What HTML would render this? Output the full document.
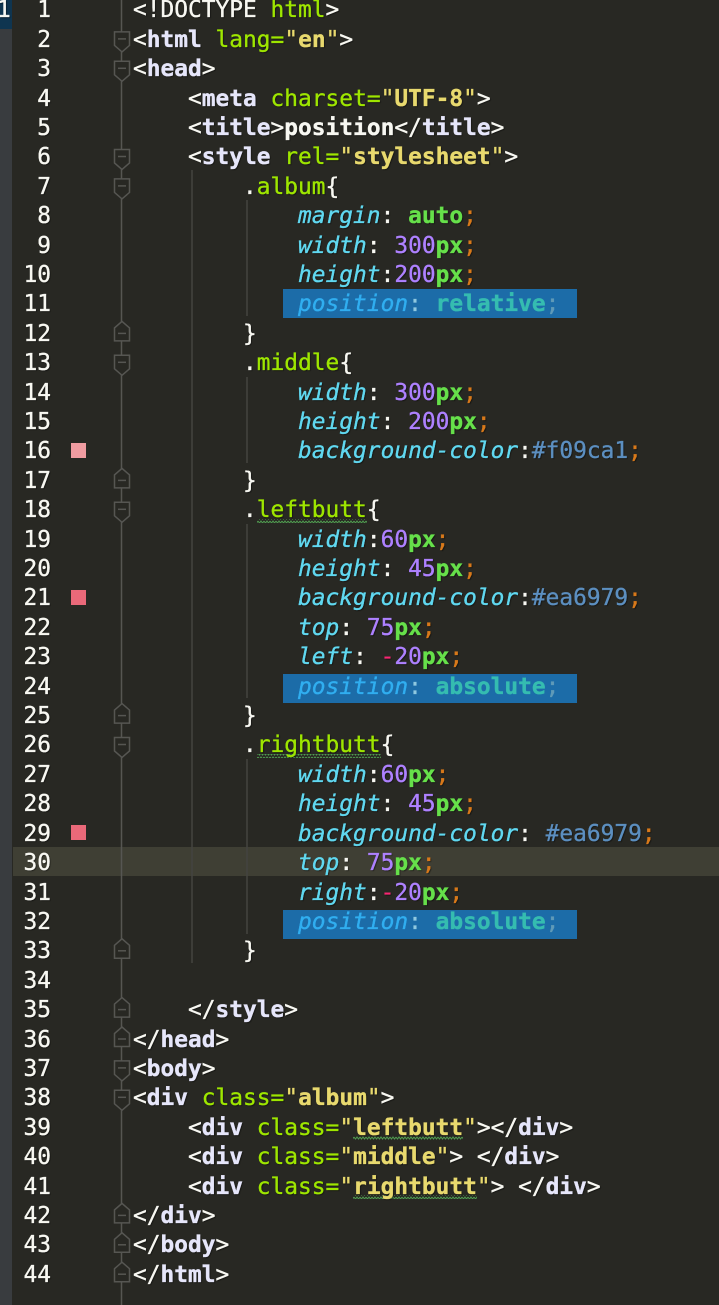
<!DOCTYPE html>
<html lang="en">
<head>
<meta charset="utf-8">
<title>position</title>
<style>
html,body{margin:0;padding:0;background:#282823;}
#w{position:relative;width:719px;height:1305px;overflow:hidden;background:#282823;}
pre{margin:0;position:absolute;font-family:"DejaVu Sans Mono","Liberation Mono",monospace;font-size:22.85px;line-height:29.4px;color:#f8f8f2;-webkit-text-stroke:0.35px currentColor;filter:blur(0.3px);text-shadow:1px 1px 1px rgba(0,0,0,.45);}
#code{left:133px;top:-3.7px;}
#nums{left:0;top:-3.7px;width:51px;text-align:right;}
.hl{position:absolute;left:13px;width:706px;top:847px;height:29px;background:#3f3f34;}
.sel{position:absolute;left:283px;width:294px;height:29px;background:#1c6ca8;}
.sw{position:absolute;left:71px;width:15px;height:15px;}
#side{position:absolute;left:0;top:0;width:12px;height:1305px;background:#393c3f;}
#cur{position:absolute;left:0;top:0;width:12px;height:29px;background:#0f3550;}
#one{position:absolute;left:-3px;top:-3.7px;margin:0;}
svg{position:absolute;left:0;top:0;}
b{font-weight:bold;}
.t{color:#e6e6fa;font-weight:bold;}
.a{color:#9ee600;}
.s{color:#e8d96e;}
.c{color:#9ee600;}
.p{font-style:italic;color:#60d8f0;}
.n{color:#ae81ff;}
.u{color:#66e04a;font-weight:bold;}
.k{color:#66e04a;font-weight:bold;}
.e{color:#d8791a;}
.h{color:#5c8fc0;}
.m{color:#f92672;}
.sp{font-style:italic;color:#30aef0;text-shadow:none;}
.sc{color:#8fc8e0;text-shadow:none;}
.sv{color:#35bcb0;font-weight:bold;text-shadow:none;}
.se{color:#5f9ab8;text-shadow:none;}
</style>
</head>
<body>
<div id="w">
<div id="side"></div>
<div id="cur"></div>
<pre id="one">1</pre>
<div class="hl"></div>
<div class="sel" style="top:289px"></div>
<div class="sel" style="top:674px"></div>
<div class="sel" style="top:910px"></div>
<div class="sw" style="top:443px;background:#f09ca1"></div>
<div class="sw" style="top:590px;background:#ea6979"></div>
<div class="sw" style="top:825px;background:#ea6979"></div>
<svg width="719" height="1305" viewBox="0 0 719 1305">
<defs>
<g id="d"><path d="M114.5 -6.5H129.5V7L122 13.5L114.5 7Z" fill="#282823" stroke="#565652" stroke-width="1.5"/><path d="M118 0.5H126" stroke="#565652" stroke-width="1.5"/></g>
<g id="u"><path d="M114.5 8.5H129.5V-4.5L122 -11L114.5 -4.5Z" fill="#282823" stroke="#565652" stroke-width="1.5"/><path d="M118 1H126" stroke="#565652" stroke-width="1.5"/></g>
<pattern id="z" width="6" height="4" patternUnits="userSpaceOnUse"><path d="M0 1L1.5 3L3 1L4.5 3L6 1" fill="none" stroke="#4f9a4f" stroke-width="1"/></pattern>
</defs>
<path d="M121.5 0V1305" stroke="#565652" stroke-width="1.5"/>
<path d="M192 170V963" stroke="#444440" stroke-width="1.5"/>
<path d="M247 200V316M247 377V463M247 524V698M247 759V934" stroke="#444440" stroke-width="1.5"/>
<use href="#d" y="38.4"/><use href="#d" y="67.8"/><use href="#d" y="156"/><use href="#d" y="185.4"/>
<use href="#u" y="332.4"/><use href="#d" y="361.8"/><use href="#u" y="479.4"/><use href="#d" y="508.8"/>
<use href="#u" y="714.6"/><use href="#d" y="744"/><use href="#u" y="949.8"/>
<use href="#u" y="1008.6"/><use href="#u" y="1038"/><use href="#d" y="1067.4"/><use href="#d" y="1096.8"/>
<use href="#u" y="1214.4"/><use href="#u" y="1243.8"/><use href="#u" y="1273.2"/>
<rect x="257" y="519" width="110" height="4" fill="url(#z)"/>
<rect x="257" y="754" width="124" height="4" fill="url(#z)"/>
<rect x="353" y="1136" width="110" height="4" fill="url(#z)"/>
<rect x="353" y="1195" width="124" height="4" fill="url(#z)"/>
</svg>
<pre id="nums">1
2
3
4
5
6
7
8
9
10
11
12
13
14
15
16
17
18
19
20
21
22
23
24
25
26
27
28
29
30
31
32
33
34
35
36
37
38
39
40
41
42
43
44</pre>
<pre id="code">&lt;!DOCTYPE <span class="a">html</span>&gt;
&lt;<span class="t">html</span> <span class="a">lang=</span><span class="s">"<b>en</b>"</span>&gt;
&lt;<span class="t">head</span>&gt;
    &lt;<span class="t">meta</span> <span class="a">charset=</span><span class="s">"<b>UTF-8</b>"</span>&gt;
    &lt;<span class="t">title</span>&gt;<b>position</b>&lt;/<span class="t">title</span>&gt;
    &lt;<span class="t">style</span> <span class="a">rel=</span><span class="s">"<b>stylesheet</b>"</span>&gt;
        .<span class="c">album</span>{
            <span class="p">margin</span>: <span class="k">auto</span><span class="e">;</span>
            <span class="p">width</span>: <span class="n">300</span><span class="u">px</span><span class="e">;</span>
            <span class="p">height</span>:<span class="n">200</span><span class="u">px</span><span class="e">;</span>
            <span class="sp">position</span><span class="sc">:</span> <span class="sv">relative</span><span class="se">;</span>
        }
        .<span class="c">middle</span>{
            <span class="p">width</span>: <span class="n">300</span><span class="u">px</span><span class="e">;</span>
            <span class="p">height</span>: <span class="n">200</span><span class="u">px</span><span class="e">;</span>
            <span class="p">background-color</span>:<span class="h">#f09ca1</span><span class="e">;</span>
        }
        .<span class="c">leftbutt</span>{
            <span class="p">width</span>:<span class="n">60</span><span class="u">px</span><span class="e">;</span>
            <span class="p">height</span>: <span class="n">45</span><span class="u">px</span><span class="e">;</span>
            <span class="p">background-color</span>:<span class="h">#ea6979</span><span class="e">;</span>
            <span class="p">top</span>: <span class="n">75</span><span class="u">px</span><span class="e">;</span>
            <span class="p">left</span>: <span class="m">-</span><span class="n">20</span><span class="u">px</span><span class="e">;</span>
            <span class="sp">position</span><span class="sc">:</span> <span class="sv">absolute</span><span class="se">;</span>
        }
        .<span class="c">rightbutt</span>{
            <span class="p">width</span>:<span class="n">60</span><span class="u">px</span><span class="e">;</span>
            <span class="p">height</span>: <span class="n">45</span><span class="u">px</span><span class="e">;</span>
            <span class="p">background-color</span>: <span class="h">#ea6979</span><span class="e">;</span>
            <span class="p">top</span>: <span class="n">75</span><span class="u">px</span><span class="e">;</span>
            <span class="p">right</span>:<span class="m">-</span><span class="n">20</span><span class="u">px</span><span class="e">;</span>
            <span class="sp">position</span><span class="sc">:</span> <span class="sv">absolute</span><span class="se">;</span>
        }

    &lt;/<span class="t">style</span>&gt;
&lt;/<span class="t">head</span>&gt;
&lt;<span class="t">body</span>&gt;
&lt;<span class="t">div</span> <span class="a">class=</span><span class="s">"<b>album</b>"</span>&gt;
    &lt;<span class="t">div</span> <span class="a">class=</span><span class="s">"<b>leftbutt</b>"</span>&gt;&lt;/<span class="t">div</span>&gt;
    &lt;<span class="t">div</span> <span class="a">class=</span><span class="s">"<b>middle</b>"</span>&gt; &lt;/<span class="t">div</span>&gt;
    &lt;<span class="t">div</span> <span class="a">class=</span><span class="s">"<b>rightbutt</b>"</span>&gt; &lt;/<span class="t">div</span>&gt;
&lt;/<span class="t">div</span>&gt;
&lt;/<span class="t">body</span>&gt;
&lt;/<span class="t">html</span>&gt;</pre>
</div>
</body>
</html>
